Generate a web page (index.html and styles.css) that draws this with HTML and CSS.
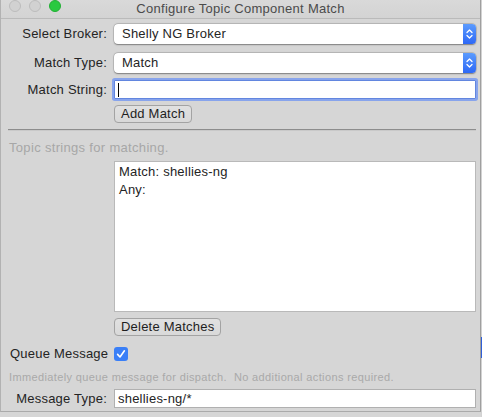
FILE: index.html
```html
<!DOCTYPE html>
<html>
<head>
<meta charset="utf-8">
<link rel="stylesheet" href="styles.css">
</head>
<body>
<div class="screen">
  <div class="window">
    <div class="titlebar">
      <div class="lights">
        <span class="light gray"></span>
        <span class="light gray"></span>
        <span class="light green"></span>
      </div>
      <div class="title">Configure Topic Component Match</div>
    </div>

    <div class="row r1">
      <label class="label">Select Broker:</label>
      <div class="popup">
        <span class="popup-text">Shelly NG Broker</span>
        <span class="stepper">
          <svg width="13" height="20" viewBox="0 0 13 20"><path d="M4 8.5 L6.5 6 L9 8.5 M4 11.5 L6.5 14 L9 11.5" fill="none" stroke="#fff" stroke-width="1.3" stroke-linecap="round" stroke-linejoin="round"/></svg>
        </span>
      </div>
    </div>

    <div class="row r2">
      <label class="label">Match Type:</label>
      <div class="popup">
        <span class="popup-text">Match</span>
        <span class="stepper">
          <svg width="13" height="20" viewBox="0 0 13 20"><path d="M4 8.5 L6.5 6 L9 8.5 M4 11.5 L6.5 14 L9 11.5" fill="none" stroke="#fff" stroke-width="1.3" stroke-linecap="round" stroke-linejoin="round"/></svg>
        </span>
      </div>
    </div>

    <div class="row r3">
      <label class="label">Match String:</label>
      <div class="field focus"><span class="caret"></span></div>
    </div>

    <div class="row r4">
      <span></span>
      <div><button class="btn">Add Match</button></div>
    </div>

    <div class="separator"></div>

    <div class="helper">Topic strings for matching.</div>

    <div class="row r5">
      <span></span>
      <div class="list">
        <div class="list-item">Match: shellies-ng</div>
        <div class="list-item">Any:</div>
      </div>
    </div>

    <div class="row r6">
      <span></span>
      <div><button class="btn">Delete Matches</button></div>
    </div>

    <div class="row r7">
      <span class="label left">Queue Message</span>
      <div>
        <span class="checkbox">
          <svg width="14" height="14" viewBox="0 0 14 14"><path d="M3.6 7.4 L6 10 L10.4 3.8" fill="none" stroke="#fff" stroke-width="1.6" stroke-linecap="round" stroke-linejoin="round"/></svg>
        </span>
      </div>
    </div>

    <div class="note">Immediately queue message for dispatch.&nbsp; No additional actions required.</div>

    <div class="row r8">
      <label class="label">Message Type:</label>
      <div class="field plain"><span class="field-text">shellies-ng/*</span></div>
    </div>
  </div>
  <div class="behind"><span class="behind-blue"></span></div>
</div>
</body>
</html>
```

FILE: styles.css
```css
html, body {
  margin: 0;
  padding: 0;
}
body {
  width: 482px;
  height: 417px;
  overflow: hidden;
  background: #d6d6d6;
  font-family: "Liberation Sans", Arial, sans-serif;
  font-size: 13px;
  letter-spacing: 0.22px;
  color: #242424;
}
.screen {
  display: flex;
  align-items: flex-start;
}
.window {
  width: 479px;
  height: 411px;
  background: #d6d6d6;
  border-left: 1px solid #b2b2b2;
  border-right: 1px solid #9f9f9f;
  border-bottom: 1px solid #aaaaaa;
  display: flex;
  flex-direction: column;
  flex-shrink: 0;
}
.behind {
  flex: 1;
  height: 417px;
  background: #d2d2d2;
  display: flex;
  flex-direction: column;
}
.behind-blue {
  display: block;
  width: 1px;
  height: 21px;
  margin-top: 337px;
  background: #2f5fd8;
}
.titlebar {
  height: 18px;
  border-bottom: 1px solid #bababa;
  background: linear-gradient(#d9d9d9, #d3d3d3);
  display: grid;
  grid-template-columns: 1fr;
}
.lights, .title {
  grid-row: 1;
  grid-column: 1;
}
.lights {
  display: flex;
  gap: 8px;
  padding-left: 8px;
  margin-top: 0;
}
.light {
  width: 12px;
  height: 12px;
  border-radius: 50%;
  box-sizing: border-box;
}
.light.gray {
  background: #d1d1d1;
  border: 0.5px solid #bcbcbc;
}
.light.green {
  background: #2ac940;
  border: 0.5px solid #22b034;
}
.title {
  text-align: center;
  line-height: 17px;
  color: #4b4b4b;
  letter-spacing: 0.27px;
}
.row {
  display: grid;
  grid-template-columns: 106px 1fr;
  column-gap: 7px;
  align-items: center;
  padding-right: 4px;
}
.label {
  text-align: right;
  line-height: 16px;
}
.label.left {
  text-align: left;
  padding-left: 9px;
  white-space: nowrap;
}
.r1 { margin-top: 5px; }
.r2 { margin-top: 9px; }
.r3 { margin-top: 7px; }
.r4 { margin-top: 6px; }
.r5 { margin-top: 5px; }
.r6 { margin-top: 6px; }
.r7 { margin-top: 10px; }
.r8 { margin-top: 5px; }
.popup {
  height: 20px;
  display: flex;
  align-items: stretch;
  background: #ffffff;
  border-radius: 4px;
  box-shadow: 0 0 0 0.5px rgba(0, 0, 0, 0.18), 0 0.5px 1.5px rgba(0, 0, 0, 0.35);
}
.popup-text {
  flex: 1;
  padding-left: 8px;
  line-height: 20px;
}
.stepper {
  width: 13px;
  border-radius: 0 4px 4px 0;
  background: linear-gradient(#5b9bfd, #2d68f6);
  display: flex;
}
.field {
  height: 17px;
  background: #ffffff;
  display: flex;
  align-items: center;
}
.field.focus {
  border: 1px solid #6286df;
  box-shadow: 0 0 0 2px #88a4ec;
  border-radius: 1px;
}
.field.plain {
  border: 1px solid #b0b0b0;
}
.caret {
  width: 1px;
  height: 14px;
  margin-left: 3px;
  background: #000000;
}
.field-text {
  padding-left: 3px;
  line-height: 17px;
}
.btn {
  height: 18px;
  padding: 0 6px;
  border: 1px solid #a3a3a3;
  border-radius: 4px;
  background: linear-gradient(#e1e1e1, #d9d9d9);
  font-family: inherit;
  font-size: 13px;
  letter-spacing: 0.22px;
  color: #1e1e1e;
  line-height: 16px;
  display: block;
}
.separator {
  margin: 6px 4px 0 7px;
  height: 1px;
  background: #8d8d8d;
  border-bottom: 1px solid #c9c9c9;
}
.helper {
  margin-top: 9px;
  padding-left: 8px;
  line-height: 16px;
  color: #a7a7a7;
  letter-spacing: 0.32px;
}
.list {
  height: 148px;
  background: #ffffff;
  border: 1px solid #b9b9b9;
  padding: 1px 0 0 4px;
}
.list-item {
  line-height: 18px;
}
.checkbox {
  width: 14px;
  height: 14px;
  border-radius: 3px;
  background: #3a7ff7;
  display: flex;
}
.note {
  margin-top: 8px;
  padding-left: 8px;
  font-size: 11px;
  line-height: 14px;
  color: #a9a9a9;
  letter-spacing: 0.37px;
  white-space: nowrap;
}
```
